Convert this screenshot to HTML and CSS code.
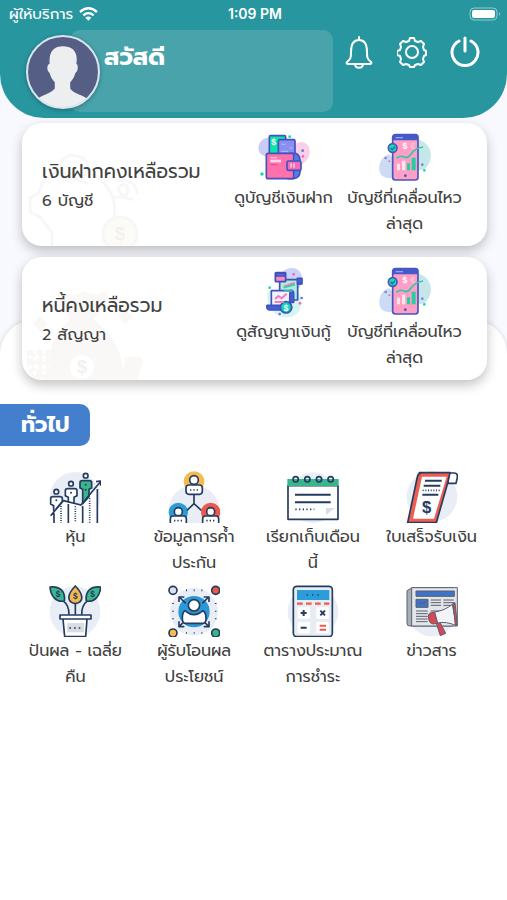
FILE: index.html
```html
<!DOCTYPE html>
<html lang="th">
<head>
  <meta charset="UTF-8" />
  <meta name="viewport" content="width=device-width, initial-scale=1.0" />
  <title>สวัสดี</title>
  <link rel="stylesheet" href="styles.css">
</head>
<body>
  <header class="header">
    <div class="status">
      <div class="carrier">
        <span>ผู้ให้บริการ</span>
        <svg width="19" height="14" viewBox="0 0 57 42" fill="none" stroke="#fff" stroke-width="7"><path d="M3 15Q28-7 54 15M13 25Q28 12 44 25"/><path d="M28 41l-9-9q9-7 18 0z" fill="#fff" stroke="none"/></svg>
      </div>
      <span class="clock">1:09 PM</span>
      <svg class="battery" width="32" height="14" viewBox="0 0 32 14"><rect x="1" y="1" width="27" height="12" rx="4" fill="none" stroke="#8fcbd0"/><rect x="3" y="3" width="23" height="8" rx="2" fill="#fff"/><path d="M30 5q2 2 0 4z" fill="#8fcbd0"/></svg>
    </div>
    <div class="profile">
      <svg class="avatar" viewBox="0 0 72 72">
        <defs><clipPath id="face"><circle cx="36" cy="36" r="35"/></clipPath></defs>
        <circle cx="36" cy="36" r="35" fill="#555e84"/>
        <path clip-path="url(#face)" fill="#eceeef" d="M23 28c-1-12 4-17 13-17s15 5 13 17c2 1 2 7-1 9-1 4-3 7-5 9v6c3 5 12 6 18 11l-5 11H16L10 63c6-5 14-6 18-11v-6c-2-2-4-5-5-9-3-2-3-8 0-9z"/>
        <circle cx="36" cy="36" r="35" fill="none" stroke="#d9e5ee" stroke-width="2"/>
      </svg>
      <div class="greeting"><h1>สวัสดี</h1></div>
      <nav class="tools">
        <button aria-label="การแจ้งเตือน"><svg width="30" height="34" viewBox="0 0 30 34"><path d="M15 2v3M3 27c4-3 4-5 4-10 0-7 2-12 8-12s8 5 8 12c0 5 0 7 4 10 1 1 0 2-1 2H4c-1 0-2-1-1-2zM11 29c0 5 8 5 8 0"/></svg></button>
        <button aria-label="ตั้งค่า"><svg width="30" height="34" viewBox="0 0 30 34"><path d="M12 6l1-3h4l1 3 3 1 3-1 3 3-1 3 1 3 2 1v4l-2 1-1 3 1 3-3 3-3-1-3 1-1 2h-4l-1-2-3-1-3 1-3-3 1-3-1-3-3-1v-4l3-1 1-3-1-3 3-3 3 1z"/><circle cx="15" cy="17" r="6"/></svg></button>
        <button aria-label="ออกจากระบบ"><svg width="30" height="34" viewBox="0 0 30 34"><path stroke-width="3" d="M9 6a13 13 0 1 0 12 0M15 3v13"/></svg></button>
      </nav>
    </div>
  </header>

  <main>
    <div class="cards">
      <section class="card">
        <svg class="mark" width="116" height="92" viewBox="0 0 116 92" fill="none" stroke="#f7f7f7" stroke-width="3">
          <path d="M3 58v-14l9-5c3-14 13-22 26-24M3 58l10 5 12 16v13M65 20c18 11 25 25 22 43M34 16c-2-12 7-16 16-14 10 2 13 8 9 19-8 6-18 5-25-5M88 43c16 2 17-14 7-12-8 2 0 15 12 14M90 27c12-4 20 4 20 13M35 26q14-3 26 4"/>
          <circle cx="93" cy="80" r="17" fill="#fcfbf8"/><text x="93" y="86" class="coin">$</text>
        </svg>
        <div class="balance"><h2>เงินฝากคงเหลือรวม</h2><p>6 บัญชี</p></div>
        <div class="actions">
          <button class="item">
            <svg class="icon" viewBox="0 0 156 156">
              <path fill="#c9cdf6" d="M32 17C3 18-6 50 8 66l36 20 45-66z"/><path fill="#fad0e8" d="M100 56c8-34 48-33 54-6 6 23-9 39-30 54z"/>
              <g stroke="#4452bf" stroke-width="5" stroke-linejoin="round">
                <rect x="34" y="11" width="49" height="63" rx="4" fill="#08e7a6"/><rect x="61" y="23" width="50" height="48" rx="4" fill="#8790ed"/>
                <path d="M96 64h14q14 1 16 20v36q-1 19-20 20H90z" fill="#527fec"/><rect x="25" y="64" width="82" height="76" rx="6" fill="#fe71ad"/><rect x="87" y="87" width="42" height="28" rx="5" fill="#f06ab7"/>
              </g>
              <path d="M37 77h20" stroke="#ffc0da" stroke-width="4"/><path d="M37 87h32" stroke="#ffd9e8" stroke-width="8"/><path d="M37 98h20" stroke="#ef4f9c" stroke-width="4"/><path d="M70 37h12M95 48h8M70 58h20" stroke="#a9b6ff" stroke-width="4"/><path d="M99 94v13m9-13v13" stroke="#ffc0da" stroke-width="5"/><text x="47" y="39" class="sym">$</text>
              <g fill="#0cdda3"><circle cx="12" cy="126" r="5"/><circle cx="95" cy="14" r="4"/></g><circle cx="134" cy="56" r="4" fill="#6475df"/><circle cx="135" cy="73" r="4" fill="#f267ac"/>
            </svg>
            <span>ดูบัญชีเงินฝาก</span>
          </button>
          <button class="item">
            <svg class="icon" viewBox="0 0 156 156">
              <path fill="#c5e7e9" d="M82 24c38-14 80 15 73 53-4 29-25 48-52 30z"/><path fill="#cddcf5" d="M32 67C5 70-8 107 7 130c18 16 48 8 69-5z"/>
              <rect x="41" y="8" width="76" height="136" rx="8" fill="#ff9fc5" stroke="#4856bd" stroke-width="5"/><path d="M41 25v-9q0-8 8-8h60q8 0 8 8v9z" fill="#4659c8"/><path d="M50 17h22" stroke="#8aa8ff" stroke-width="4"/>
              <path d="M52 79q12-10 23-4t22-10 35-20" fill="none" stroke="#31c7ad" stroke-width="5"/><g fill="#fce3ee"><path d="M54 95h9v20h-9zM69 86h10v29H69z"/></g><path d="M84 94h9v21h-9zM98 77h12v38H98z" fill="#25cfa2"/>
              <circle cx="41" cy="48" r="13" fill="#15dbad" stroke="#4856bd" stroke-width="5"/><path d="M35 48l5 5 8-9" fill="none" stroke="#2b5fb0" stroke-width="4"/><text x="78" y="52" class="sym">$</text><text x="102" y="50" class="sym pale">€</text>
              <circle cx="79" cy="131" r="4" fill="#4856bd"/><circle cx="130" cy="98" r="4" fill="#7d86e8"/><circle cx="136" cy="115" r="4" fill="#29cfa8"/><circle cx="20" cy="78" r="4" fill="#7d86e8"/><circle cx="31" cy="88" r="3" fill="#f267ac"/>
            </svg>
            <span>บัญชีที่เคลื่อนไหว<br>ล่าสุด</span>
          </button>
        </div>
      </section>

      <section class="card">
        <svg class="mark" width="116" height="92" viewBox="0 0 116 92" fill="#f9f8f7">
          <path d="M43 32L31 10q-2-7 7-5 10 5 19-2 11 6 19 1 8 0 4 9L67 32c16 11 28 28 31 60H20c-1-21 6-48 23-60zM0 62h25v30H0zM98 69h14q5 1 3 8l-5 15H96zM6 35l7-7 8 8-8 8zM91 28l7-7 8 8-8 8z"/>
          <path d="M1 69h22M1 79h22M8 62v29M17 62v29" stroke="#fff" stroke-width="3" stroke-dasharray="4 3"/><circle cx="55" cy="79" r="12" fill="#fff"/><text x="55" y="85" class="coin">$</text>
        </svg>
        <div class="balance"><h2>หนี้คงเหลือรวม</h2><p>2 สัญญา</p></div>
        <div class="actions">
          <button class="item">
            <svg class="icon" viewBox="0 0 156 156">
              <path fill="#cad2f8" d="M65 44C65-4 130-6 132 35c2 20-13 47-35 40z"/><path fill="#d5f5f1" d="M30 74c-11 40 17 81 58 80 45-3 50-49 31-80z"/>
              <g stroke="#4051bd" stroke-width="5" stroke-linejoin="round">
                <path d="M65 41h65v13h-11v48H65z" fill="#a9efdd"/><rect x="52" y="20" width="31" height="27" rx="2" fill="#fb89b9"/><path d="M54 22h27v8H54z" fill="#6476dc"/><path d="M118 37h14v16h-14z" fill="#4261d2"/>
                <path d="M40 74h57v49H40z" fill="#f0f2ff"/><path d="M96 74q11-3 11 8v27H95z" fill="#4261d2"/><path d="M27 118h70q8 7 0 14H34q-10-2-7-14z" fill="#4261d2"/><circle cx="84" cy="124" r="17" fill="#10d7b3"/>
              </g>
              <path d="M51 99l10-9 10 7 15-14M50 108h28M77 62l14-5 19-6" fill="none" stroke="#f97ab3" stroke-width="6"/><path d="M77 65l34-9M77 75h26" stroke="#42c9ad" stroke-width="5"/><text x="84" y="134" class="sym">$</text>
              <circle cx="35" cy="65" r="4" fill="#20d3a5"/><circle cx="107" cy="25" r="4" fill="#f267ac"/><circle cx="126" cy="112" r="4" fill="#f267ac"/><circle cx="131" cy="96" r="4" fill="#6475df"/><circle cx="65" cy="144" r="4" fill="#6475df"/>
            </svg>
            <span>ดูสัญญาเงินกู้</span>
          </button>
          <button class="item">
            <svg class="icon" viewBox="0 0 156 156">
              <path fill="#c5e7e9" d="M82 24c38-14 80 15 73 53-4 29-25 48-52 30z"/><path fill="#cddcf5" d="M32 67C5 70-8 107 7 130c18 16 48 8 69-5z"/>
              <rect x="41" y="8" width="76" height="136" rx="8" fill="#ff9fc5" stroke="#4856bd" stroke-width="5"/><path d="M41 25v-9q0-8 8-8h60q8 0 8 8v9z" fill="#4659c8"/><path d="M50 17h22" stroke="#8aa8ff" stroke-width="4"/>
              <path d="M52 79q12-10 23-4t22-10 35-20" fill="none" stroke="#31c7ad" stroke-width="5"/><g fill="#fce3ee"><path d="M54 95h9v20h-9zM69 86h10v29H69z"/></g><path d="M84 94h9v21h-9zM98 77h12v38H98z" fill="#25cfa2"/>
              <circle cx="41" cy="48" r="13" fill="#15dbad" stroke="#4856bd" stroke-width="5"/><path d="M35 48l5 5 8-9" fill="none" stroke="#2b5fb0" stroke-width="4"/><text x="78" y="52" class="sym">$</text><text x="102" y="50" class="sym pale">€</text>
              <circle cx="79" cy="131" r="4" fill="#4856bd"/><circle cx="130" cy="98" r="4" fill="#7d86e8"/><circle cx="136" cy="115" r="4" fill="#29cfa8"/><circle cx="20" cy="78" r="4" fill="#7d86e8"/><circle cx="31" cy="88" r="3" fill="#f267ac"/>
            </svg>
            <span>บัญชีที่เคลื่อนไหว<br>ล่าสุด</span>
          </button>
        </div>
      </section>
    </div>

    <section class="sheet">
      <h2 class="tab">ทั่วไป</h2>
      <div class="menu">
        <button class="item">
          <svg class="icon line" viewBox="0 0 156 156">
            <circle cx="78" cy="79" r="76" class="halo"/><path d="M15 120V156H145V40L96 102 43 90z" fill="#fff" stroke="none"/>
            <g fill="#fff"><circle cx="22" cy="62" r="7"/><circle cx="66" cy="38" r="7"/><circle cx="110" cy="14" r="7"/><path d="M14 121V104L5 99V83q0-6 7-6h21q7 0 7 6v9l-19 22M58 94V79l-9-5V59q0-6 7-6h21q7 0 7 6v15l-9 5v18"/></g>
            <path d="M101 98V55l-8-4V35q0-6 7-6h21q7 0 7 6v16l-8 4v22z" fill="#38b78a"/>
            <path d="M5 134L43 89l53 13 57-68M141 32l13-2 1 14M15 127v29M58 99v57M101 105v51M145 54v102"/>
            <path d="M36 105v50M79 106v49M122 82v73" stroke-dasharray="3 4"/><g fill="#243c60" stroke="none"><circle cx="22" cy="88" r="3"/><circle cx="66" cy="65" r="3"/><circle cx="110" cy="41" r="3"/><circle cx="110" cy="56" r="3"/></g>
          </svg>
          <span>หุ้น</span>
        </button>
        <button class="item">
          <svg class="icon line" viewBox="0 0 156 156">
            <path d="M12 156a76 76 0 1 1 132 0z" class="halo"/><g stroke="none"><circle cx="78" cy="32" r="31" fill="#f6ba51"/><circle cx="31" cy="124" r="29" fill="#2e9bd9"/><circle cx="128" cy="124" r="29" fill="#ee574c"/></g>
            <path d="M78 69v29l-21 20M78 98l22 20"/><g fill="#fff"><circle cx="78" cy="27" r="13"/><rect x="54" y="42" width="49" height="28" rx="9"/><circle cx="31" cy="122" r="12"/><path d="M7 156v-13q0-8 8-8h32q8 0 8 8v13M104 156v-13q0-8 8-8h32q8 0 8 8v13"/><circle cx="128" cy="122" r="12"/></g>
            <path d="M66 57h27M18 149h28M115 149h28" stroke-dasharray="4 6"/>
          </svg>
          <span>ข้อมูลการค้ำ<br>ประกัน</span>
        </button>
        <button class="item">
          <svg class="icon line" viewBox="0 0 156 156">
            <circle cx="78" cy="80" r="76" class="halo"/><path d="M3 44h150v101H3z" fill="#fff"/><path d="M1 24h154v21H1z" fill="#38b58a" stroke="none"/>
            <g><circle cx="26" cy="25" r="8"/><circle cx="61" cy="25" r="8"/><circle cx="96" cy="25" r="8"/><circle cx="131" cy="25" r="8"/></g><path d="M24 71h107M24 94h107" stroke-width="6"/><path d="M25 115h57" stroke-dasharray="4 7"/><path d="M117 111h26l-26 21z" fill="#d8dde6" stroke="none"/>
          </svg>
          <span>เรียกเก็บเดือน<br>นี้</span>
        </button>
        <button class="item">
          <svg class="icon line" viewBox="0 0 156 156">
            <circle cx="78" cy="77" r="76" class="halo"/><path d="M128 6h18q10 2 8 13l-4 18h-24z" fill="#fff"/><path d="M40 5h92l-7 31-34 119H5L34 18Q36 7 46 5z" fill="#ee5d50"/><path d="M48 17h74L84 143H21z" fill="#fff" stroke="none"/>
            <path d="M57 29h50M53 44h50M49 71h48" stroke-width="6"/><path d="M50 58h51" stroke-dasharray="3 5"/><text x="62" y="126" class="bill">$</text>
          </svg>
          <span>ใบเสร็จรับเงิน</span>
        </button>
        <button class="item">
          <svg class="icon line" viewBox="0 0 156 156">
            <circle cx="78" cy="80" r="76" class="halo"/><path d="M41 46q20 15 19 43M79 53v36M117 46q-20 15-19 43"/>
            <g fill="#39b88d"><path d="M3 6c29-3 47 12 43 42C22 53 5 34 3 6zM155 6c-29-3-47 12-43 42 24 5 41-14 43-42z"/></g><path d="M79 3c27 28 25 49 0 53-25-4-27-25 0-53z" fill="#f5b74f"/>
            <path d="M33 90h93v12H33zM42 102h72l-4 53H47z" fill="#fff"/><path d="M54 114h51v28H54z" fill="#d9dee5" stroke="none"/><path d="M61 129h40" stroke-dasharray="5 9"/><text x="79" y="41" class="leaf">$</text><text x="27" y="36" class="leaf">$</text><text x="131" y="36" class="leaf">$</text>
          </svg>
          <span>ปันผล - เฉลี่ย<br>คืน</span>
        </button>
        <button class="item">
          <svg class="icon line" viewBox="0 0 156 156">
            <circle cx="78" cy="80" r="72" class="halo"/><circle cx="78" cy="80" r="47" fill="#2d98d6" stroke="none"/>
            <path d="M34 36l19 19M122 36l-19 19M34 124l19-19M122 124l-19-19M33 51V36h16M107 36h16v15M33 109v16h16M107 125h16v-16"/>
            <path d="M51 77q27 24 54 0 9 5 9 23 0 15-9 15H52q-9 0-9-15 0-18 8-23z" fill="#fff"/><circle cx="78" cy="61" r="17" fill="#fff"/>
            <path d="M54 16h50M54 144h50M15 54v50M143 54v50" stroke-dasharray="3 20"/><circle cx="15" cy="16" r="12" fill="#dae2ed"/><circle cx="143" cy="16" r="12" fill="#ed5649"/><circle cx="15" cy="144" r="12" fill="#f6bb52"/><circle cx="143" cy="144" r="12" fill="#36b587"/>
          </svg>
          <span>ผู้รับโอนผล<br>ประโยชน์</span>
        </button>
        <button class="item">
          <svg class="icon line" viewBox="0 0 156 156">
            <circle cx="78" cy="80" r="76" class="halo"/><rect x="19" y="4" width="117" height="151" rx="10" fill="#e8edf4"/><path d="M30 15h97v30H30z" fill="#2c9ddb" stroke="none"/><path d="M59 30h40" stroke-dasharray="4 12"/><path d="M30 56h97" stroke="#ee5b50" stroke-width="7" stroke-dasharray="17 10"/>
            <path d="M32 67h37v34H32zM88 67h37v34H88zM32 111h37v34H32zM88 111h37v34H88z" fill="#fff" stroke="none"/><path d="M41 84h18M50 75v18M100 77l14 14M114 77l-14 14M41 128h18" stroke-width="6"/><path d="M98 122h19M98 134h19" stroke="#ee5b50" stroke-width="6"/>
          </svg>
          <span>ตารางประมาณ<br>การชำระ</span>
        </button>
        <button class="item">
          <svg class="icon news" viewBox="0 0 156 156">
            <circle cx="78" cy="80" r="74" class="halo"/><path d="M19 8L3 17v98q0 8 8 8h130V8z" fill="#a9adb5"/><path d="M17 8h137v115H17z" fill="#e3e5e9"/><path d="M30 18h115v16H30z" fill="#3f73c4"/><path d="M30 43h36v24H30z" fill="#3f73c4"/><path d="M36 59q10-12 15-2l9-8" fill="none"/>
            <path d="M74 45h31M74 53h31M74 61h31M112 45h31M112 53h31M112 61h31M30 78h35M30 86h35M30 94h35M30 102h35M30 110h35M74 78h31M74 86h31M112 78h31"/>
            <path d="M91 115l11-3 17 33-16 7z" fill="#d94755"/><path d="M76 83q-12 2-8 18 2 15 14 16l14-3-9-33z" fill="#d94755"/><path d="M86 81q30-4 53-23l12 64q-32-14-56-8z" fill="#f3f4f8"/><path d="M141 54l6-1 7 66-6 2z" fill="#d94755"/>
          </svg>
          <span>ข่าวสาร</span>
        </button>
      </div>
    </section>
  </main>
</body>
</html>
```
FILE: styles.css
```css
* { box-sizing: border-box; }
body { margin: 0; min-height: 100vh; display: flex; flex-direction: column; background: #f8f9fe; color: #414141; font-family: Prompt, Kanit, "Noto Sans Thai", "Noto Sans", sans-serif; }
h1, h2, p { margin: 0; }
button { padding: 0; border: 0; background: none; color: inherit; font: inherit; cursor: pointer; }
svg { display: block; flex: none; }

.header { position: relative; height: 118px; background: #28969f; color: #fff; border-radius: 0 0 44px 44px; }
.status { display: grid; grid-template-columns: 1fr auto 1fr; align-items: center; height: 28px; padding: 0 6px 0 9px; font-size: 15px; line-height: 20px; }
.carrier { display: flex; align-items: center; gap: 6px; }
.clock { font-family: Inter, sans-serif; font-size: 14px; font-weight: 600; }
.battery { justify-self: end; }
.profile { display: flex; align-items: flex-start; padding: 2px 27px 0 26px; }
.avatar { position: relative; z-index: 1; width: 74px; height: 74px; margin-top: 5px; filter: drop-shadow(0 1px 2px rgba(0,0,0,0.3)); }
.greeting { flex: 1; height: 82px; margin-left: -30px; padding: 12px 0 0 34px; background: #48a3ab; border-radius: 10px; }
h1 { font-size: 24px; line-height: 30px; }
.tools { display: flex; gap: 23px; margin: 5px 0 0 11px; }
.tools svg { fill: none; stroke: #fff; stroke-width: 2; stroke-linecap: round; stroke-linejoin: round; }

main { flex: 1; display: flex; flex-direction: column; }
.cards { position: relative; z-index: 1; display: grid; gap: 11px; padding: 5px 20px 0 22px; }
.card { position: relative; display: flex; min-height: 123px; padding-left: 20px; background: #fff; border-radius: 20px; box-shadow: 0 5px 12px rgba(0,0,0,0.24); }
.mark { position: absolute; left: 5px; bottom: 0; border-radius: 0 0 0 16px; }
.coin { fill: #f2f1ef; stroke: none; font: bold 18px "Liberation Sans", sans-serif; text-anchor: middle; }
.balance { position: relative; flex: 1; padding-top: 35px; }
.balance h2 { font-size: 19px; font-weight: 400; line-height: 28px; }
.balance p { font-size: 16px; line-height: 30px; }
.actions { display: grid; grid-template-columns: 121px 121px; padding: 9px 22px 0 0; }

.item { display: flex; flex-direction: column; align-items: center; gap: 1px; font-size: 16px; line-height: 26px; text-align: center; white-space: nowrap; }
.icon { width: 52px; height: 52px; }
.line { fill: none; stroke: #243c60; stroke-width: 5; stroke-linejoin: round; }
.halo { fill: #e9eef6; stroke: none; }
.news { stroke: #596071; stroke-width: 3; }
.sym { fill: #fff; font: bold 26px "Liberation Sans", sans-serif; text-anchor: middle; }
.pale { fill: #ffc4dc; }
.bill { fill: #243c60; stroke: none; font: bold 50px "Liberation Sans", sans-serif; text-anchor: middle; }
.leaf { fill: #243c60; stroke: none; font: bold 25px "Liberation Sans", sans-serif; text-anchor: middle; }

.sheet { flex: 1; margin-top: -60px; padding-top: 84px; background: #fff; border-radius: 34px 34px 0 0; box-shadow: 0 0 5px rgba(0,0,0,0.14); }
.tab { width: 90px; height: 42px; padding-left: 21px; background: #447fcd; color: #fff; border-radius: 0 10px 10px 0; font-size: 22px; line-height: 42px; }
.menu { display: grid; grid-template-columns: repeat(4, 1fr); gap: 9px 0; padding: 25px 16px; }
.menu .item { justify-content: flex-start; }
```
